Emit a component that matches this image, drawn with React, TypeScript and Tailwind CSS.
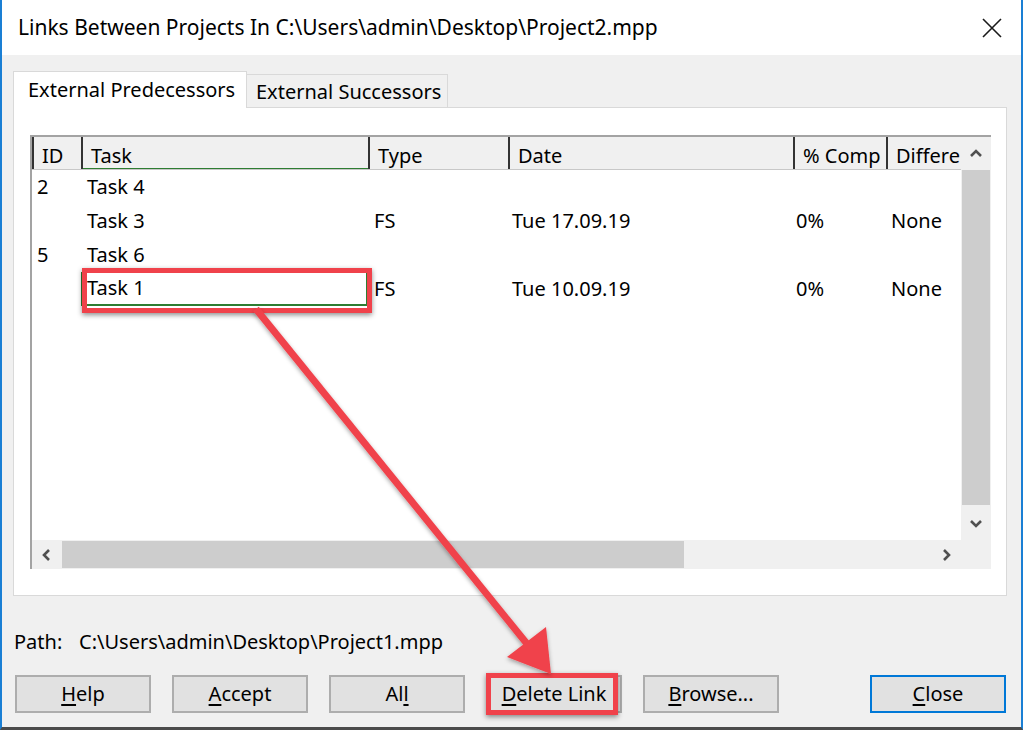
import React from "react";

const RED = "#f0424b";

type Row = { id?: string; task: string; type?: string; date?: string; comp?: string; diff?: string; focus?: boolean };

const rows: Row[] = [
    { id: "2", task: "Task 4" },
    { task: "Task 3", type: "FS", date: "Tue 17.09.19", comp: "0%", diff: "None" },
    { id: "5", task: "Task 6" },
    { task: "Task 1", type: "FS", date: "Tue 10.09.19", comp: "0%", diff: "None", focus: true },
];

const cols = "grid grid-cols-[49px_287px_140px_285px_93px_75px]";

function Mn({ text, at }: { text: string; at: number }) {
    return (
        <span>
            {text.slice(0, at)}
            <span className="underline underline-offset-[3px] decoration-[1.5px]">{text[at]}</span>
            {text.slice(at + 1)}
        </span>
    );
}

function DlgButton({ children, primary }: { children: React.ReactNode; primary?: boolean }) {
    return (
        <div
            className={
                "w-[136px] h-[38px] flex items-center justify-center bg-[#e1e1e1] border-2 " +
                (primary ? "border-[#0078d7]" : "border-[#adadad]")
            }
        >
            {children}
        </div>
    );
}

function Chevron({ dir }: { dir: "up" | "down" | "left" | "right" }) {
    const d = {
        up: "M3 10 L8 5 L13 10",
        down: "M3 6 L8 11 L13 6",
        left: "M10 3 L5 8 L10 13",
        right: "M6 3 L11 8 L6 13",
    }[dir];
    return (
        <svg width="16" height="16" viewBox="0 0 16 16">
            <path d={d} fill="none" stroke="#505050" strokeWidth="2.6" />
        </svg>
    );
}

export default function App() {
    return (
        <div className="relative w-[1028px] h-[731px] bg-white overflow-hidden font-['Noto_Sans',sans-serif] text-[20px] text-black leading-none">
            <div className="w-[1023px] h-[730px] flex flex-col border-l-2 border-r-2 border-[#1a7fd4] border-b-[3px] border-b-[#4b4b4b]">
                {/* title bar */}
                <div className="h-[55px] bg-white flex items-center justify-between pl-[16px] pr-[18px] shrink-0">
                    <span className="text-[21px]">Links Between Projects In C:\Users\admin\Desktop\Project2.mpp</span>
                    <svg width="22" height="22" viewBox="0 0 22 22">
                        <path d="M2 2 L20 20 M20 2 L2 20" stroke="#1a1a1a" strokeWidth="1.6" />
                    </svg>
                </div>

                <div className="flex-1 bg-[#f0f0f0] flex flex-col pt-[15px]">
                    {/* tabs */}
                    <div className="flex items-end h-[37px] pl-[11px]">
                        <div className="h-[37px] w-[234px] bg-white border border-b-0 border-[#d9d9d9] pl-[14px] flex items-center relative top-[1px]">
                            External Predecessors
                        </div>
                        <div className="h-[33px] w-[201px] bg-[#f0f0f0] border border-b-0 border-l-0 border-[#d9d9d9] pl-[9px] pt-[2px] flex items-center">
                            External Successors
                        </div>
                    </div>

                    {/* panel */}
                    <div className="ml-[11px] mr-[14px] h-[489px] bg-white border border-[#d9d9d9] pt-[27px] pl-[16px] pr-[13px]">
                        <div className="w-[961px] h-[434px] border-l-2 border-t-2 border-[#a3a3a3] flex flex-col">
                            <div className="flex flex-1 min-h-0">
                                <div className="w-[929px] overflow-hidden">
                                    {/* header */}
                                    <div className={cols + " h-[33px] bg-[#f0f0f0] border-b border-[#c8c8c8]"}>
                                        {["ID", "Task", "Type", "Date", "% Comp", "Difference"].map((h) => (
                                            <div
                                                key={h}
                                                className="relative border-l-2 border-[#333333] pl-[8px] pt-[6px] flex items-center whitespace-nowrap overflow-hidden"
                                            >
                                                {h}
                                                {h === "Task" && <div className="absolute left-0 right-0 bottom-[-1px] h-[2px] bg-[#2e7d32]" />}
                                            </div>
                                        ))}
                                    </div>
                                    {/* rows */}
                                    {rows.map((r, i) => (
                                        <div key={i} className={cols + " h-[34px] relative"}>
                                            {r.focus && <div className="absolute left-[-2px] top-[1px] bottom-0 w-[2px] bg-[#2e7d32]" />}
                                            <div className="pl-[5px] flex items-center">{r.id}</div>
                                            <div
                                                className={
                                                    "flex items-center " +
                                                    (r.focus ? "border-x-2 border-b-2 border-[#2e7d32] pl-[4px]" : "pl-[6px]")
                                                }
                                            >
                                                {r.task}
                                            </div>
                                            <div className="pl-[6px] flex items-center">{r.type}</div>
                                            <div className="pl-[4px] flex items-center">{r.date}</div>
                                            <div className="pl-[3px] flex items-center">{r.comp}</div>
                                            <div className="pl-[5px] flex items-center">{r.diff}</div>
                                        </div>
                                    ))}
                                </div>
                                {/* vertical scrollbar */}
                                <div className="w-[30px] bg-[#f0f0f0] flex flex-col">
                                    <div className="h-[33px] flex items-center justify-center">
                                        <Chevron dir="up" />
                                    </div>
                                    <div className="h-[335px] bg-[#cdcdcd] mx-[1px]" />
                                    <div className="flex-1 flex items-center justify-center">
                                        <Chevron dir="down" />
                                    </div>
                                </div>
                            </div>
                            {/* horizontal scrollbar */}
                            <div className="h-[29px] bg-[#f0f0f0] flex items-stretch">
                                <div className="w-[30px] flex items-center justify-center">
                                    <Chevron dir="left" />
                                </div>
                                <div className="w-[622px] bg-[#cdcdcd] my-[1px]" />
                                <div className="flex-1" />
                                <div className="w-[30px] flex items-center justify-center">
                                    <Chevron dir="right" />
                                </div>
                                <div className="w-[30px]" />
                            </div>
                        </div>
                    </div>

                    {/* path */}
                    <div className="mt-[34px] pl-[12px] flex items-center h-[24px]">
                        <span className="w-[65px]">Path:</span>
                        <span>C:\Users\admin\Desktop\Project1.mpp</span>
                    </div>

                    {/* buttons */}
                    <div className="mt-[21px] pl-[13px] pr-[15px] flex items-center">
                        <div className="flex gap-[21px]">
                            <DlgButton><Mn text="Help" at={0} /></DlgButton>
                            <DlgButton><Mn text="Accept" at={0} /></DlgButton>
                            <DlgButton><Mn text="All" at={2} /></DlgButton>
                            <DlgButton><Mn text="Delete Link" at={0} /></DlgButton>
                            <DlgButton><Mn text="Browse..." at={0} /></DlgButton>
                        </div>
                        <div className="ml-auto">
                            <DlgButton primary><Mn text="Close" at={0} /></DlgButton>
                        </div>
                    </div>
                </div>
            </div>

            {/* annotation overlay */}
            <div className="absolute left-[82px] top-[268px] w-[290px] h-[45px] border-[5px] border-[#f0424b] shadow-[0_2px_5px_rgba(0,0,0,0.45)]" />
            <div className="absolute left-[486px] top-[673px] w-[132px] h-[42px] border-[5px] border-[#f0424b] shadow-[0_2px_5px_rgba(0,0,0,0.45)]" />
            <svg className="absolute left-0 top-0 pointer-events-none" width="1028" height="731" viewBox="0 0 1028 731">
                <defs>
                    <filter id="sh" x="-10%" y="-10%" width="120%" height="120%">
                        <feDropShadow dx="0" dy="2" stdDeviation="2" floodColor="#000" floodOpacity="0.35" />
                    </filter>
                </defs>
                <g filter="url(#sh)">
                    <line x1="256" y1="309" x2="532" y2="650" stroke={RED} strokeWidth="7" />
                    <polygon points="551,674 546,627 507,657" fill={RED} />
                </g>
            </svg>
        </div>
    );
}
